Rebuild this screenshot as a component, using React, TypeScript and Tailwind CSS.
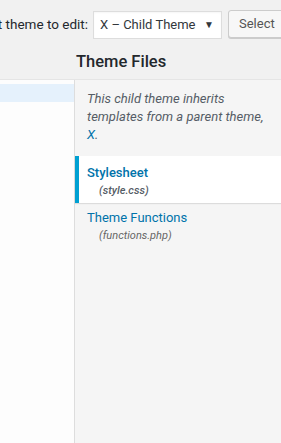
export default function App() {
  return (
    <div className="w-[281px] h-[443px] overflow-hidden bg-[#f1f1f1] text-[#444] font-['Roboto',sans-serif] flex flex-col">
      {/* Theme picker */}
      <div className="flex items-center h-[28px] mt-[10px] shrink-0">
        <div className="w-[88px] shrink-0 flex justify-end overflow-hidden">
          <label className="whitespace-nowrap text-[13.5px] text-[#23282d]">Select theme to edit:</label>
        </div>
        <div className="ml-[5px] w-[129px] h-[28px] mt-[1px] shrink-0 bg-white border border-[#ddd] flex items-center justify-between pl-[6px] pr-[7px] shadow-[inset_0_1px_2px_rgba(0,0,0,0.04)]">
          <span className="text-[13px] text-[#32373c] whitespace-nowrap">X – Child Theme</span>
          <span className="text-[10px] text-[#32373c]">▼</span>
        </div>
        <button className="ml-[6px] h-[28px] shrink-0 px-[10px] rounded-[3px] border border-[#ccc] bg-[#f7f7f7] text-[13px] text-[#555] shadow-[0_1px_0_#ccc] whitespace-nowrap">
          Select
        </button>
      </div>

      {/* Heading */}
      <div className="h-[41px] shrink-0 flex items-center pl-[76px] pt-[7px]">
        <h2 className="text-[16.5px] font-medium text-[#23282d] leading-none">Theme Files</h2>
      </div>

      <div className="flex flex-1 border-t border-[#e5e5e5]">
        {/* Editor area (left) */}
        <div className="w-[75px] shrink-0 bg-[#fdfdfd] border-r border-[#ddd] pt-[4px]">
          <div className="h-[18px] bg-[#e5f1fc]" />
        </div>

        {/* File list */}
        <div className="w-[206px] shrink-0 bg-[#f5f5f5]">
          <p className="w-[197px] pl-[12px] pt-[10px] pb-[12px] text-[13px] italic leading-[18px] text-[#555d66]">
            This child theme inherits templates from a parent theme, <span className="text-[#0073aa]">X</span>.
          </p>
          <ul>
            <li className="bg-white border-l-[4px] border-[#00a0d2] pl-[8px] pt-[7px] pb-[4px] shadow-[0_1px_1px_rgba(0,0,0,0.1)]">
              <div className="text-[13px] font-medium text-[#0073aa] leading-[20px]">Stylesheet</div>
              <div className="pl-[12px] text-[11px] italic font-medium text-[#555d66] leading-[16px]">(style.css)</div>
            </li>
            <li className="pl-[12px] pt-[5px] pb-[6px]">
              <div className="text-[13px] text-[#0073aa] leading-[20px]">Theme Functions</div>
              <div className="pl-[12px] text-[11px] italic text-[#666] leading-[16px]">(functions.php)</div>
            </li>
          </ul>
        </div>
      </div>
    </div>
  );
}
